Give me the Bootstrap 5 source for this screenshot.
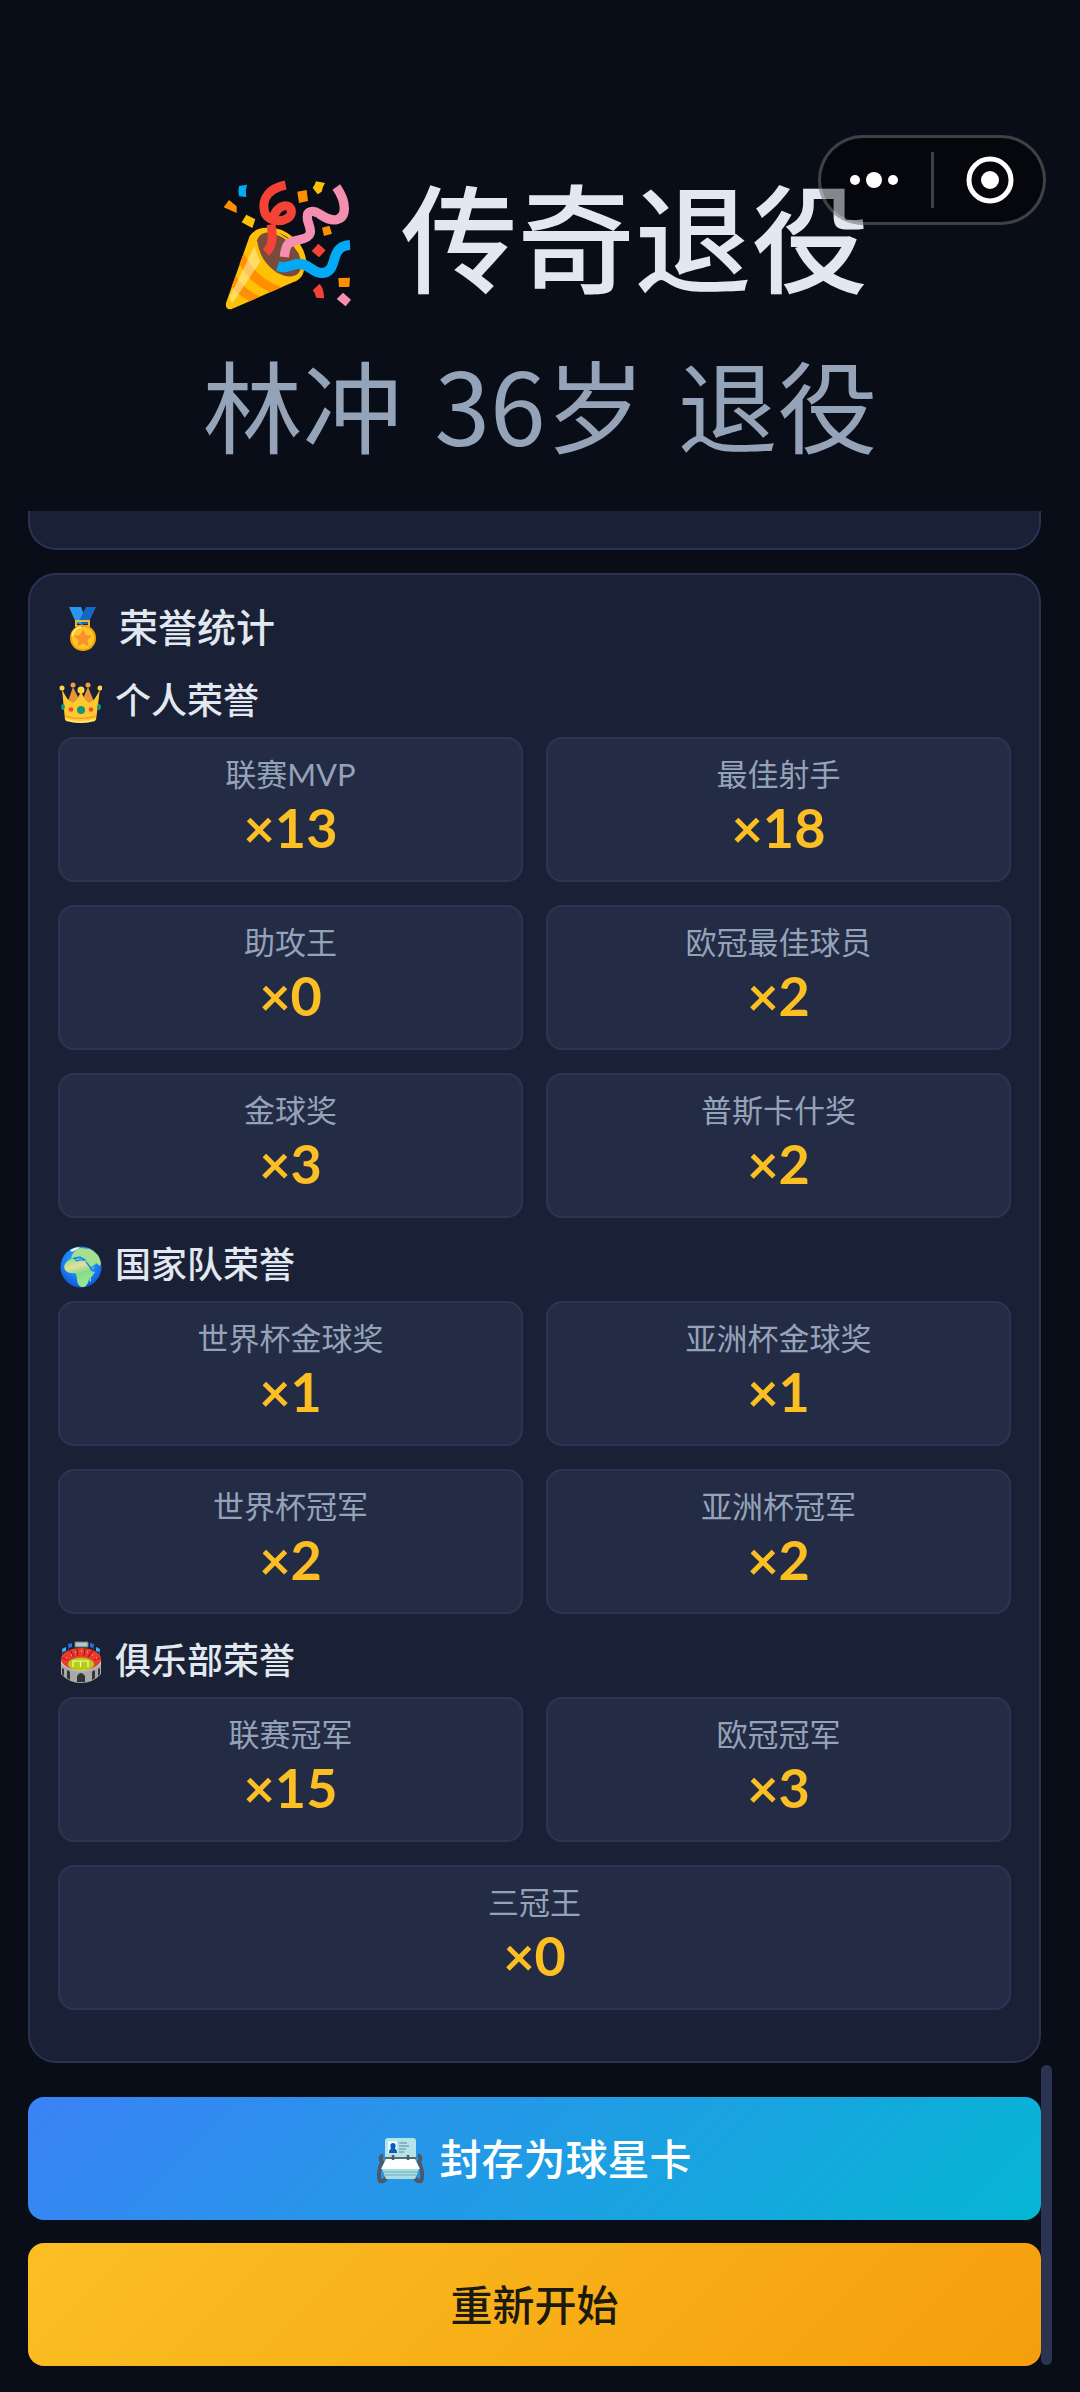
<!DOCTYPE html>
<html lang="zh-CN">
<head>
<meta charset="utf-8">
<meta name="viewport" content="width=device-width, initial-scale=1">
<title>传奇退役</title>
<link href="https://cdn.jsdelivr.net/npm/bootstrap@5.3.0/dist/css/bootstrap.min.css" rel="stylesheet">
<style>
  body { background: #090d18; color: #e2e8f0; font-family: "Noto Sans CJK SC", sans-serif; }
  svg { display: block; flex: none; }
  .page-head { padding: 161px 28px 48px; }
  .page-title { font-size: 117px; line-height: 144px; font-weight: 500; gap: 45px; }
  .page-title svg { margin: 12px 0 -12px; }
  .page-sub { font-size: 100px; line-height: 120px; margin-top: 38px; gap: 32px; color: #94a3b8; }
  .capsule { top: 135px; right: 34px; width: 228px; height: 90px; border: 3px solid rgba(255,255,255,.23); border-radius: 45px; background: rgba(0,0,0,.42); }
  .capsule button { flex: 1 1 0; background: none; border: 0; padding: 0 3px 0 0; }
  .capsule button:last-child { padding: 0 0 0 3px; }
  .capsule-line { width: 3px; height: 56px; background: rgba(255,255,255,.23); }
  .page-body { padding: 0 39px 26px 28px; }
  .panel { background: #1a2035; border: 2px solid #2a3352; border-radius: 28px; }
  .panel-cut { height: 39px; border-top: 0; border-top-left-radius: 0; border-top-right-radius: 0; margin-bottom: 23px; }
  .honors { padding: 21px 28px 51px; }
  .honors svg { margin: 4px 0 -4px; }
  .honors-title { font-size: 39px; line-height: 58px; font-weight: 500; gap: 13px; }
  .honors-group { font-size: 36px; line-height: 52px; font-weight: 500; gap: 13px; margin: 18px 0 13px; }
  .honors-grid { --bs-gutter-x: 23px; --bs-gutter-y: 23px; }
  .honor { background: #242b45; border: 2px solid #2b3453; border-radius: 16px; padding: 15px 12px 20px; text-align: center; }
  .honor-name { font-family: Lato, "Noto Sans CJK SC", sans-serif; font-size: 31px; line-height: 40px; color: #94a3b8; }
  .honor-count { font-family: Lato, sans-serif; font-size: 54px; line-height: 64px; font-weight: 700; color: #fbbf24; margin-top: 2px; }
  .actions { margin-top: 34px; gap: 23px; }
  .action { height: 123px; border: 0; border-radius: 16px; padding: 0 12px 4px; font-size: 42px; line-height: 60px; font-weight: 500; gap: 14px; }
  .action-save, .action-save:hover { background: linear-gradient(135deg, #3b82f6, #06b6d4); color: #fff; }
  .action-again, .action-again:hover { background: linear-gradient(135deg, #fbbf24, #f59e0b); color: #1c1a10; }
  .action svg { margin: 3px 0 -3px; }
  .thumb { width: 11px; height: 300px; right: 28px; bottom: 27px; border-radius: 6px; background: #2a3352; }
</style>
</head>
<body>
<header class="page-head position-relative text-center">
  <h1 class="page-title d-flex justify-content-center align-items-center mb-0">
    <svg width="144" height="136" viewBox="0 36 432 408" aria-hidden="true">
      <path d="M116 213 Q138 182 182 190 L262 240 Q292 290 276 326 Q268 344 246 352 L62 432 Q42 436 45 414 Z" fill="#ffc107"/>
      <path d="M98 265 Q140 345 212 366 L178 382 Q112 352 86 296 Z" fill="#ff8f00"/>
      <path d="M74 332 Q104 378 148 394 L116 408 Q82 392 62 364 Z" fill="#ff8f00"/>
      <path d="M130 244 L148 290 L66 412 Q54 410 56 396 Z" fill="#fff3b0" opacity=".55"/>
      <path d="M138 226 Q150 194 190 206 Q236 222 262 264 Q280 304 262 325 Q238 346 196 322 Q146 288 138 226 Z" fill="#784b3a"/>
      <path d="M182 192 Q232 202 262 240 Q282 270 280 300" fill="none" stroke="#ffc107" stroke-width="11"/>
      <path d="M165 262 Q192 238 180 178" fill="none" stroke="#f44336" stroke-width="27"/>
      <path d="M224 60 C176 70 152 98 160 138 C170 180 236 172 241 144 C244 112 200 112 184 164" fill="none" stroke="#f44336" stroke-width="27"/>
      <path d="M220 276 C224 232 236 230 266 224 C314 214 296 190 290 166 C284 134 306 134 330 150 C366 174 400 168 400 130 C400 104 390 86 376 66" fill="none" stroke="#f48fb1" stroke-width="28"/>
      <path d="M200 304 C226 312 234 302 258 297 C294 292 304 326 334 324 C386 320 350 244 417 240" fill="none" stroke="#03a9f4" stroke-width="30"/>
      <path d="M84 63 L108 59 Q102 78 106 96 L84 94 Q80 78 84 63Z" fill="#03a9f4"/>
      <path d="M54 105 L77 124 L77 144 L38 127Z M259 80 L287 75 L291 108 L264 114Z M333 188 L355 182 L363 206 L339 213Z M382 339 L417 338 L415 366 L384 366Z" fill="#ff8f00"/>
      <path d="M106 149 L133 163 L124 189 L92 172Z M315 49 L342 54 Q334 66 332 80 L320 88 L305 68 Q312 60 315 49Z" fill="#ffc107"/>
      <path d="M322 236 L344 256 L324 277 L302 258Z M326 356 Q340 374 339 400 L315 398 Q314 384 305 376Z" fill="#f44336"/>
      <path d="M396 383 L420 404 L404 424 L377 402Z" fill="#f48fb1"/>
    </svg>
    <span>传奇退役</span>
  </h1>
  <p class="page-sub d-flex justify-content-center mb-0"><span>林冲</span> <span>36岁</span> <span>退役</span></p>
  <div class="capsule position-absolute d-flex align-items-center">
    <button type="button" class="d-flex justify-content-center" aria-label="更多">
      <svg width="50" height="20" viewBox="0 0 50 20" fill="#fff"><circle cx="6" cy="10" r="5"/><circle cx="25" cy="10" r="8"/><circle cx="44" cy="10" r="5"/></svg>
    </button>
    <span class="capsule-line"></span>
    <button type="button" class="d-flex justify-content-center" aria-label="关闭">
      <svg width="48" height="48" viewBox="0 0 48 48"><circle cx="24" cy="24" r="21" fill="none" stroke="#fff" stroke-width="5"/><circle cx="24" cy="24" r="9" fill="#fff"/></svg>
    </button>
  </div>
</header>

<main class="page-body position-relative">
  <div class="panel panel-cut"></div>

  <section class="panel honors">
    <h2 class="honors-title d-flex align-items-center mb-0">
      <svg width="48" height="48" viewBox="0 0 48 48" aria-hidden="true">
        <path d="M11 2h12l6 15-5 3-6-2z" fill="#2d95f0"/><path d="M28 2h10l-8 17h-6l-2-5z" fill="#1567c4"/>
        <path d="M18 16h13v5H18z" fill="none" stroke="#e9b92b" stroke-width="2"/>
        <circle cx="25" cy="33" r="13" fill="#f5a300"/><circle cx="25" cy="33" r="11" fill="#ffc52a"/>
        <path d="M25 24l2.800 6 6.600.7-4.900 4.500 1.400 6.500-5.900-3.300-5.900 3.300 1.400-6.500-4.900-4.500 6.600-.7z" fill="#f79329"/>
        <path d="M14 31q2-8 9-9" fill="none" stroke="#fff3a6" stroke-width="1.500"/>
      </svg>
      <span>荣誉统计</span>
    </h2>

    <h3 class="honors-group d-flex align-items-center">
      <svg width="44" height="44" viewBox="0 0 44 44" aria-hidden="true">
        <path d="M9 24L15 7l8 16 7-16 7 17-5 8H13z" fill="#e8953a"/>
        <circle cx="15" cy="5" r="2.500" fill="#ef9f3b"/><circle cx="30" cy="5" r="2.500" fill="#ef9f3b"/>
        <path d="M4 9q5 12 11 14 6-4 8-13 2 9 8 13 6-2 11-14l-4 31q-15 6-31 0z" fill="#fdc92e"/>
        <circle cx="4" cy="8" r="2.500" fill="#ffd54a"/><circle cx="42" cy="8" r="2.500" fill="#ffd54a"/><circle cx="23" cy="10" r="3.500" fill="#ffd54a"/>
        <path d="M7 36q16 5 31 0" fill="none" stroke="#f19534" stroke-width="1.200"/>
        <path d="M8 40q15 4 29 0" fill="none" stroke="#ffe36b" stroke-width="2"/>
        <circle cx="23" cy="30" r="4" fill="#12977d"/><circle cx="13" cy="29.500" r="2.300" fill="#f04a38"/><circle cx="33" cy="29.500" r="2.300" fill="#f04a38"/>
        <ellipse cx="5" cy="27" rx="1.800" ry="3" fill="#12977d"/><ellipse cx="41" cy="27" rx="1.800" ry="3" fill="#12977d"/>
      </svg>
      <span>个人荣誉</span>
    </h3>
    <div class="row honors-grid">
      <div class="col-6"><div class="honor"><div class="honor-name">联赛MVP</div><div class="honor-count">×13</div></div></div>
      <div class="col-6"><div class="honor"><div class="honor-name">最佳射手</div><div class="honor-count">×18</div></div></div>
      <div class="col-6"><div class="honor"><div class="honor-name">助攻王</div><div class="honor-count">×0</div></div></div>
      <div class="col-6"><div class="honor"><div class="honor-name">欧冠最佳球员</div><div class="honor-count">×2</div></div></div>
      <div class="col-6"><div class="honor"><div class="honor-name">金球奖</div><div class="honor-count">×3</div></div></div>
      <div class="col-6"><div class="honor"><div class="honor-name">普斯卡什奖</div><div class="honor-count">×2</div></div></div>
    </div>

    <h3 class="honors-group d-flex align-items-center">
      <svg width="44" height="44" viewBox="0 0 44 44" aria-hidden="true">
        <defs>
          <radialGradient id="sea" cx=".5" cy=".35" r=".65"><stop offset="0" stop-color="#2fb3fb"/><stop offset=".6" stop-color="#1b83f5"/><stop offset="1" stop-color="#1256d8"/></radialGradient>
          <linearGradient id="land" x1="0" y1="0" x2=".3" y2="1"><stop offset="0" stop-color="#7fe08a"/><stop offset=".35" stop-color="#e3e09a"/><stop offset=".6" stop-color="#84dd86"/><stop offset="1" stop-color="#9ce692"/></linearGradient>
        </defs>
        <circle cx="23" cy="23" r="20.500" fill="url(#sea)"/>
        <path d="M7 20q4-6 10-5 8 0 12 4l4 8 4 1q-2 4-6 7-1 6-5 8-6 1-7-7 0-5-2-7-6 1-9-2-3-3-1-7z" fill="url(#land)"/>
        <path d="M14 11q3-5 8-7l10 1q9 4 11 14l-1 3-4-3-3 6-6-5-4-6-7-1-5 2z" fill="#a5e08c"/>
        <path d="M16 14l6-1 5 3-5 0-3 1zM28 18l5 6 4-3" stroke="#1b83f5" stroke-width="1.200" fill="none"/>
        <path d="M12 6q5-3 10-3l-2 2-6 3z" fill="#e9f7ff"/><path d="M31 36l2-3v5z" fill="#8de08c"/>
      </svg>
      <span>国家队荣誉</span>
    </h3>
    <div class="row honors-grid">
      <div class="col-6"><div class="honor"><div class="honor-name">世界杯金球奖</div><div class="honor-count">×1</div></div></div>
      <div class="col-6"><div class="honor"><div class="honor-name">亚洲杯金球奖</div><div class="honor-count">×1</div></div></div>
      <div class="col-6"><div class="honor"><div class="honor-name">世界杯冠军</div><div class="honor-count">×2</div></div></div>
      <div class="col-6"><div class="honor"><div class="honor-name">亚洲杯冠军</div><div class="honor-count">×2</div></div></div>
    </div>

    <h3 class="honors-group d-flex align-items-center">
      <svg width="44" height="44" viewBox="0 0 44 44" aria-hidden="true">
        <path d="M3 20v14q8 9 20 9t20-9V20z" fill="#a9a9a9"/>
        <path d="M3 21q20 16 40 0v3q-20 15-40 0z" fill="#c9c9c9"/>
        <ellipse cx="23" cy="19" rx="20" ry="11" fill="#ee3a2b"/>
        <path d="M16 17l-4-7M20 16l-1-8M26 16l1-8M30 17l5-7M36 20l6-2M10 20l-6-2" stroke="#a3211b" stroke-width="1.300"/>
        <path d="M8 18h1M13 15h1M17 12h1M23 11h1M29 12h1M34 15h1M38 18h1" stroke="#ff9a8e" stroke-width="1.500"/>
        <ellipse cx="23" cy="24" rx="13" ry="6.500" fill="#b5cc18"/>
        <path d="M15 27v-6h15v6M22.500 21v6" fill="none" stroke="#f3ffb0" stroke-width="1.200"/>
        <path d="M19 42v-6q4-6 8 0v6zM12 40v-8q-2-3-3-1v7zM6 36v-7l-2-1v6zM34 40v-8q2-3 3-1v7zM40 36v-7l2-1v6z" fill="#333"/>
        <path d="M17 2h13v5H17z" fill="#b8c4c8" stroke="#6b777c" stroke-width="1"/>
        <path d="M10 4l4-1v4l-3 1v3M36 4l-4-1v4l3 1v3" fill="#1d73e0"/><path d="M4 9l4-2v4l-3 1v4M42 9l-4-2v4l3 1v4" fill="#3fb2f5"/>
      </svg>
      <span>俱乐部荣誉</span>
    </h3>
    <div class="row honors-grid">
      <div class="col-6"><div class="honor"><div class="honor-name">联赛冠军</div><div class="honor-count">×15</div></div></div>
      <div class="col-6"><div class="honor"><div class="honor-name">欧冠冠军</div><div class="honor-count">×3</div></div></div>
      <div class="col-12"><div class="honor"><div class="honor-name">三冠王</div><div class="honor-count">×0</div></div></div>
    </div>
  </section>

  <div class="actions d-flex flex-column">
    <button type="button" class="btn action action-save d-flex justify-content-center align-items-center">
      <svg width="48" height="48" viewBox="0 0 48 48" aria-hidden="true">
        <path d="M6 19q-4 2-1 7-5 12-2 19 4 1 6-3M41 19q4 2 1 7 5 12 2 19-4 1-6-3" fill="none" stroke="#4d5964" stroke-width="4"/>
        <rect x="8" y="2" width="31" height="22" rx="3" fill="#b4e4ea"/>
        <rect x="11" y="5" width="9" height="12" fill="#e8fbff"/><path d="M12 17q0-4 2-4-2-6 2-6t2 6q2 0 2 4z" fill="#0b5fb3"/>
        <path d="M22 7h8M22 10h10M22 13h7M22 16h5" stroke="#7aa7b3" stroke-width="1.300"/>
        <path d="M9 23h29l5 10H4z" fill="#fff"/><path d="M8 22h31" stroke="#37424a" stroke-width="1.500"/>
        <path d="M16 19v5M31 19v5" stroke="#4d5964" stroke-width="2.500"/>
        <path d="M5 33h37l-4 10H9z" fill="#a9dde4"/><path d="M6 36h35M8 39h31" stroke="#6fb0bb" stroke-width="1.200"/>
      </svg>
      <span>封存为球星卡</span>
    </button>
    <button type="button" class="btn action action-again d-flex justify-content-center align-items-center">重新开始</button>
  </div>
  <div class="thumb position-absolute"></div>
</main>
<script src="https://cdn.jsdelivr.net/npm/bootstrap@5.3.0/dist/js/bootstrap.bundle.min.js"></script>
</body>
</html>
